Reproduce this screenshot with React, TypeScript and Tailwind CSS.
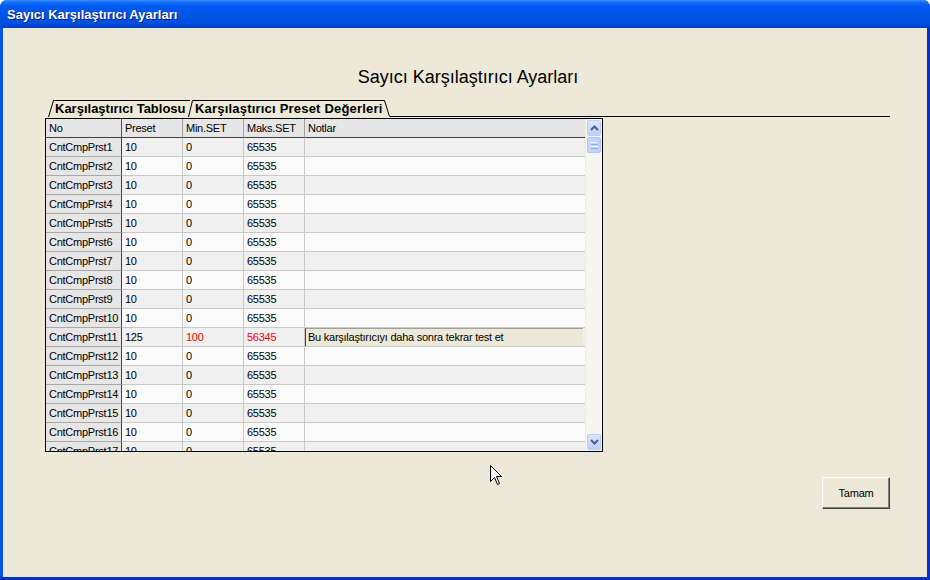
import React from "react";

const rows = Array.from({ length: 17 }, (_, i) => {
  const n = i + 1;
  if (n === 11) {
    return { no: "CntCmpPrst11", preset: "125", min: "100", max: "56345", note: "Bu karşılaştırıcıyı daha sonra tekrar test et", special: true };
  }
  return { no: `CntCmpPrst${n}`, preset: "10", min: "0", max: "65535", note: "", special: false };
});

function Chevron({ up }: { up: boolean }) {
  return (
    <svg width="9" height="6" viewBox="0 0 9 6">
      {up ? (
        <polyline points="1,5 4.5,1.5 8,5" fill="none" stroke="#4d6185" strokeWidth="2" />
      ) : (
        <polyline points="1,1 4.5,4.5 8,1" fill="none" stroke="#4d6185" strokeWidth="2" />
      )}
    </svg>
  );
}

export default function App() {
  return (
    <div className="relative w-[930px] h-[580px] flex flex-col bg-[#0a2fc4] rounded-t-[7px] overflow-hidden font-['Liberation_Sans',Arial,sans-serif]">
      {/* Title bar */}
      <div className="h-[28px] shrink-0 flex items-center pl-[7px] pt-[1px] text-white font-bold text-[13px] [text-shadow:1px_1px_0_#0a1c80] bg-[linear-gradient(to_bottom,#3d8dff_0%,#1470fb_8%,#0059ef_22%,#0055e6_50%,#0052e0_80%,#0048d2_92%,#003bbd_100%)]">
        Sayıcı Karşılaştırıcı Ayarları
      </div>

      {/* Body */}
      <div className="flex-1 mr-[3px] mb-[3px] border-l-[3px] border-[#0c55ea] bg-[#ece9d8] flex flex-col">
        <div className="pt-[39px] pl-[6px] text-center text-[18px] leading-[21px] text-black">
          Sayıcı Karşılaştırıcı Ayarları
        </div>

        {/* Tabs */}
        <div className="mt-[12px] ml-[45px] mr-[37px] h-[17px] flex items-stretch">
          <div className="relative w-[142px] h-[17px] pl-[7px] text-[13px] leading-[17px] font-bold text-black whitespace-nowrap">
            <svg className="absolute inset-0" width="142" height="17" viewBox="0 0 142 17">
              <polygon points="0.5,17 5.5,0.5 142,0.5 142,17" fill="#ece9d8" />
              <polyline points="0.5,17 5.5,0.5 142,0.5" fill="none" stroke="#000" strokeWidth="1" />
            </svg>
            <span className="relative">Karşılaştırıcı Tablosu</span>
          </div>
          <div className="relative -ml-[2px] w-[202px] h-[17px] pl-[7px] text-[13px] leading-[17px] font-bold tracking-[0.2px] text-black whitespace-nowrap">
            <svg className="absolute inset-0" width="202" height="17" viewBox="0 0 202 17">
              <polygon points="0.5,17 4.5,0.5 196.5,0.5 201.5,17" fill="#ece9d8" />
              <polyline points="0.5,17 4.5,0.5 196.5,0.5 201.5,16.5" fill="none" stroke="#000" strokeWidth="1" />
            </svg>
            <span className="relative">Karşılaştırıcı Preset Değerleri</span>
          </div>
          <div className="flex-1 border-b border-black" />
        </div>

        {/* Grid */}
        <div className="mt-[1px] ml-[42px] w-[558px] h-[334px] border border-black flex overflow-hidden text-[11px] tracking-[-0.25px] text-black">
          <div className="w-[539px] flex flex-col">
            <div className="grid grid-cols-[76px_61px_61px_61px_280px] h-[19px] shrink-0 bg-[#e6e6e6]">
              {["No", "Preset", "Min.SET", "Maks.SET", "Notlar"].map((h, i) => (
                <div
                  key={h}
                  className={`h-[19px] pl-[3px] leading-[18px] border-b border-[#404040] whitespace-nowrap ${i === 0 ? "border-r border-r-[#505050]" : ""} ${i > 0 && i < 4 ? "border-r border-r-[#a0a0a0]" : ""}`}
                >
                  {h}
                </div>
              ))}
            </div>
            {rows.map((r, i) => {
              const bg = i % 2 === 0 ? "bg-[#f0f0f0]" : "bg-[#fbfbfb]";
              return (
                <div key={r.no} className={`grid grid-cols-[76px_61px_61px_61px_280px] h-[19px] shrink-0 ${bg}`}>
                  <div className="h-[19px] pl-[3px] leading-[18px] bg-[#e6e6e6] border-r border-r-[#404040] border-b border-b-[#a8a8a8] whitespace-nowrap">
                    {r.no}
                  </div>
                  <div className="h-[19px] pl-[3px] leading-[18px] border-r border-b border-[#c8c8c8]">{r.preset}</div>
                  <div className={`h-[19px] pl-[3px] leading-[18px] border-r border-b border-[#c8c8c8] ${r.special ? "text-[#ff0000]" : ""}`}>{r.min}</div>
                  <div className={`h-[19px] pl-[3px] leading-[18px] border-r border-b border-[#c8c8c8] ${r.special ? "text-[#ff0000]" : ""}`}>{r.max}</div>
                  <div className="h-[19px] border-b border-[#c8c8c8] pr-[2px]">
                    {r.special ? (
                      <div className="h-[18px] bg-[#ece9d8] border-l border-t border-l-[#404040] border-t-[#a0a0a0] pl-[2px] leading-[17px] whitespace-nowrap">
                        {r.note}
                      </div>
                    ) : null}
                  </div>
                </div>
              );
            })}
          </div>

          {/* Scrollbar */}
          <div className="w-[17px] flex flex-col bg-[#f6f5f0] border-l border-[#eeede5] pt-[1px] pb-[1px]">
            <div className="mx-[1px] h-[16px] rounded-[2px] border border-[#b9cdf7] bg-[linear-gradient(to_bottom,#dbe5fd,#bccffa)] flex items-center justify-center">
              <Chevron up />
            </div>
            <div className="mx-[1px] mt-[1px] h-[16px] rounded-[2px] border border-[#b0c6f6] bg-[linear-gradient(to_right,#c9d8fc,#bcd0fa)] flex flex-col items-center justify-center gap-[1px]">
              <div className="w-[7px] h-[1px] bg-[#eef3fe]" />
              <div className="w-[7px] h-[1px] bg-[#8cabef]" />
              <div className="w-[7px] h-[1px] bg-[#eef3fe]" />
              <div className="w-[7px] h-[1px] bg-[#8cabef]" />
            </div>
            <div className="flex-1" />
            <div className="mx-[1px] h-[16px] rounded-[2px] border border-[#b9cdf7] bg-[linear-gradient(to_bottom,#dbe5fd,#bccffa)] flex items-center justify-center">
              <Chevron up={false} />
            </div>
          </div>
        </div>

        {/* Button */}
        <div className="mt-[25px] mr-[37px] flex justify-end">
          <button className="w-[68px] h-[32px] bg-[#ece9d8] border border-t-white border-l-white border-r-[#404040] border-b-[#404040] shadow-[inset_-1px_-1px_0_#808080] text-[11px] tracking-[-0.2px] text-black">
            Tamam
          </button>
        </div>
      </div>

      {/* Mouse cursor */}
      <svg className="absolute left-[490px] top-[465px]" width="13" height="21" viewBox="0 0 13 21">
        <polygon
          points="0.5,0.5 0.5,16.5 4.5,12.5 7.5,19.5 9.5,18.5 6.5,11.5 11.5,11.5"
          fill="#fff"
          stroke="#000"
          strokeWidth="1"
        />
      </svg>
    </div>
  );
}
